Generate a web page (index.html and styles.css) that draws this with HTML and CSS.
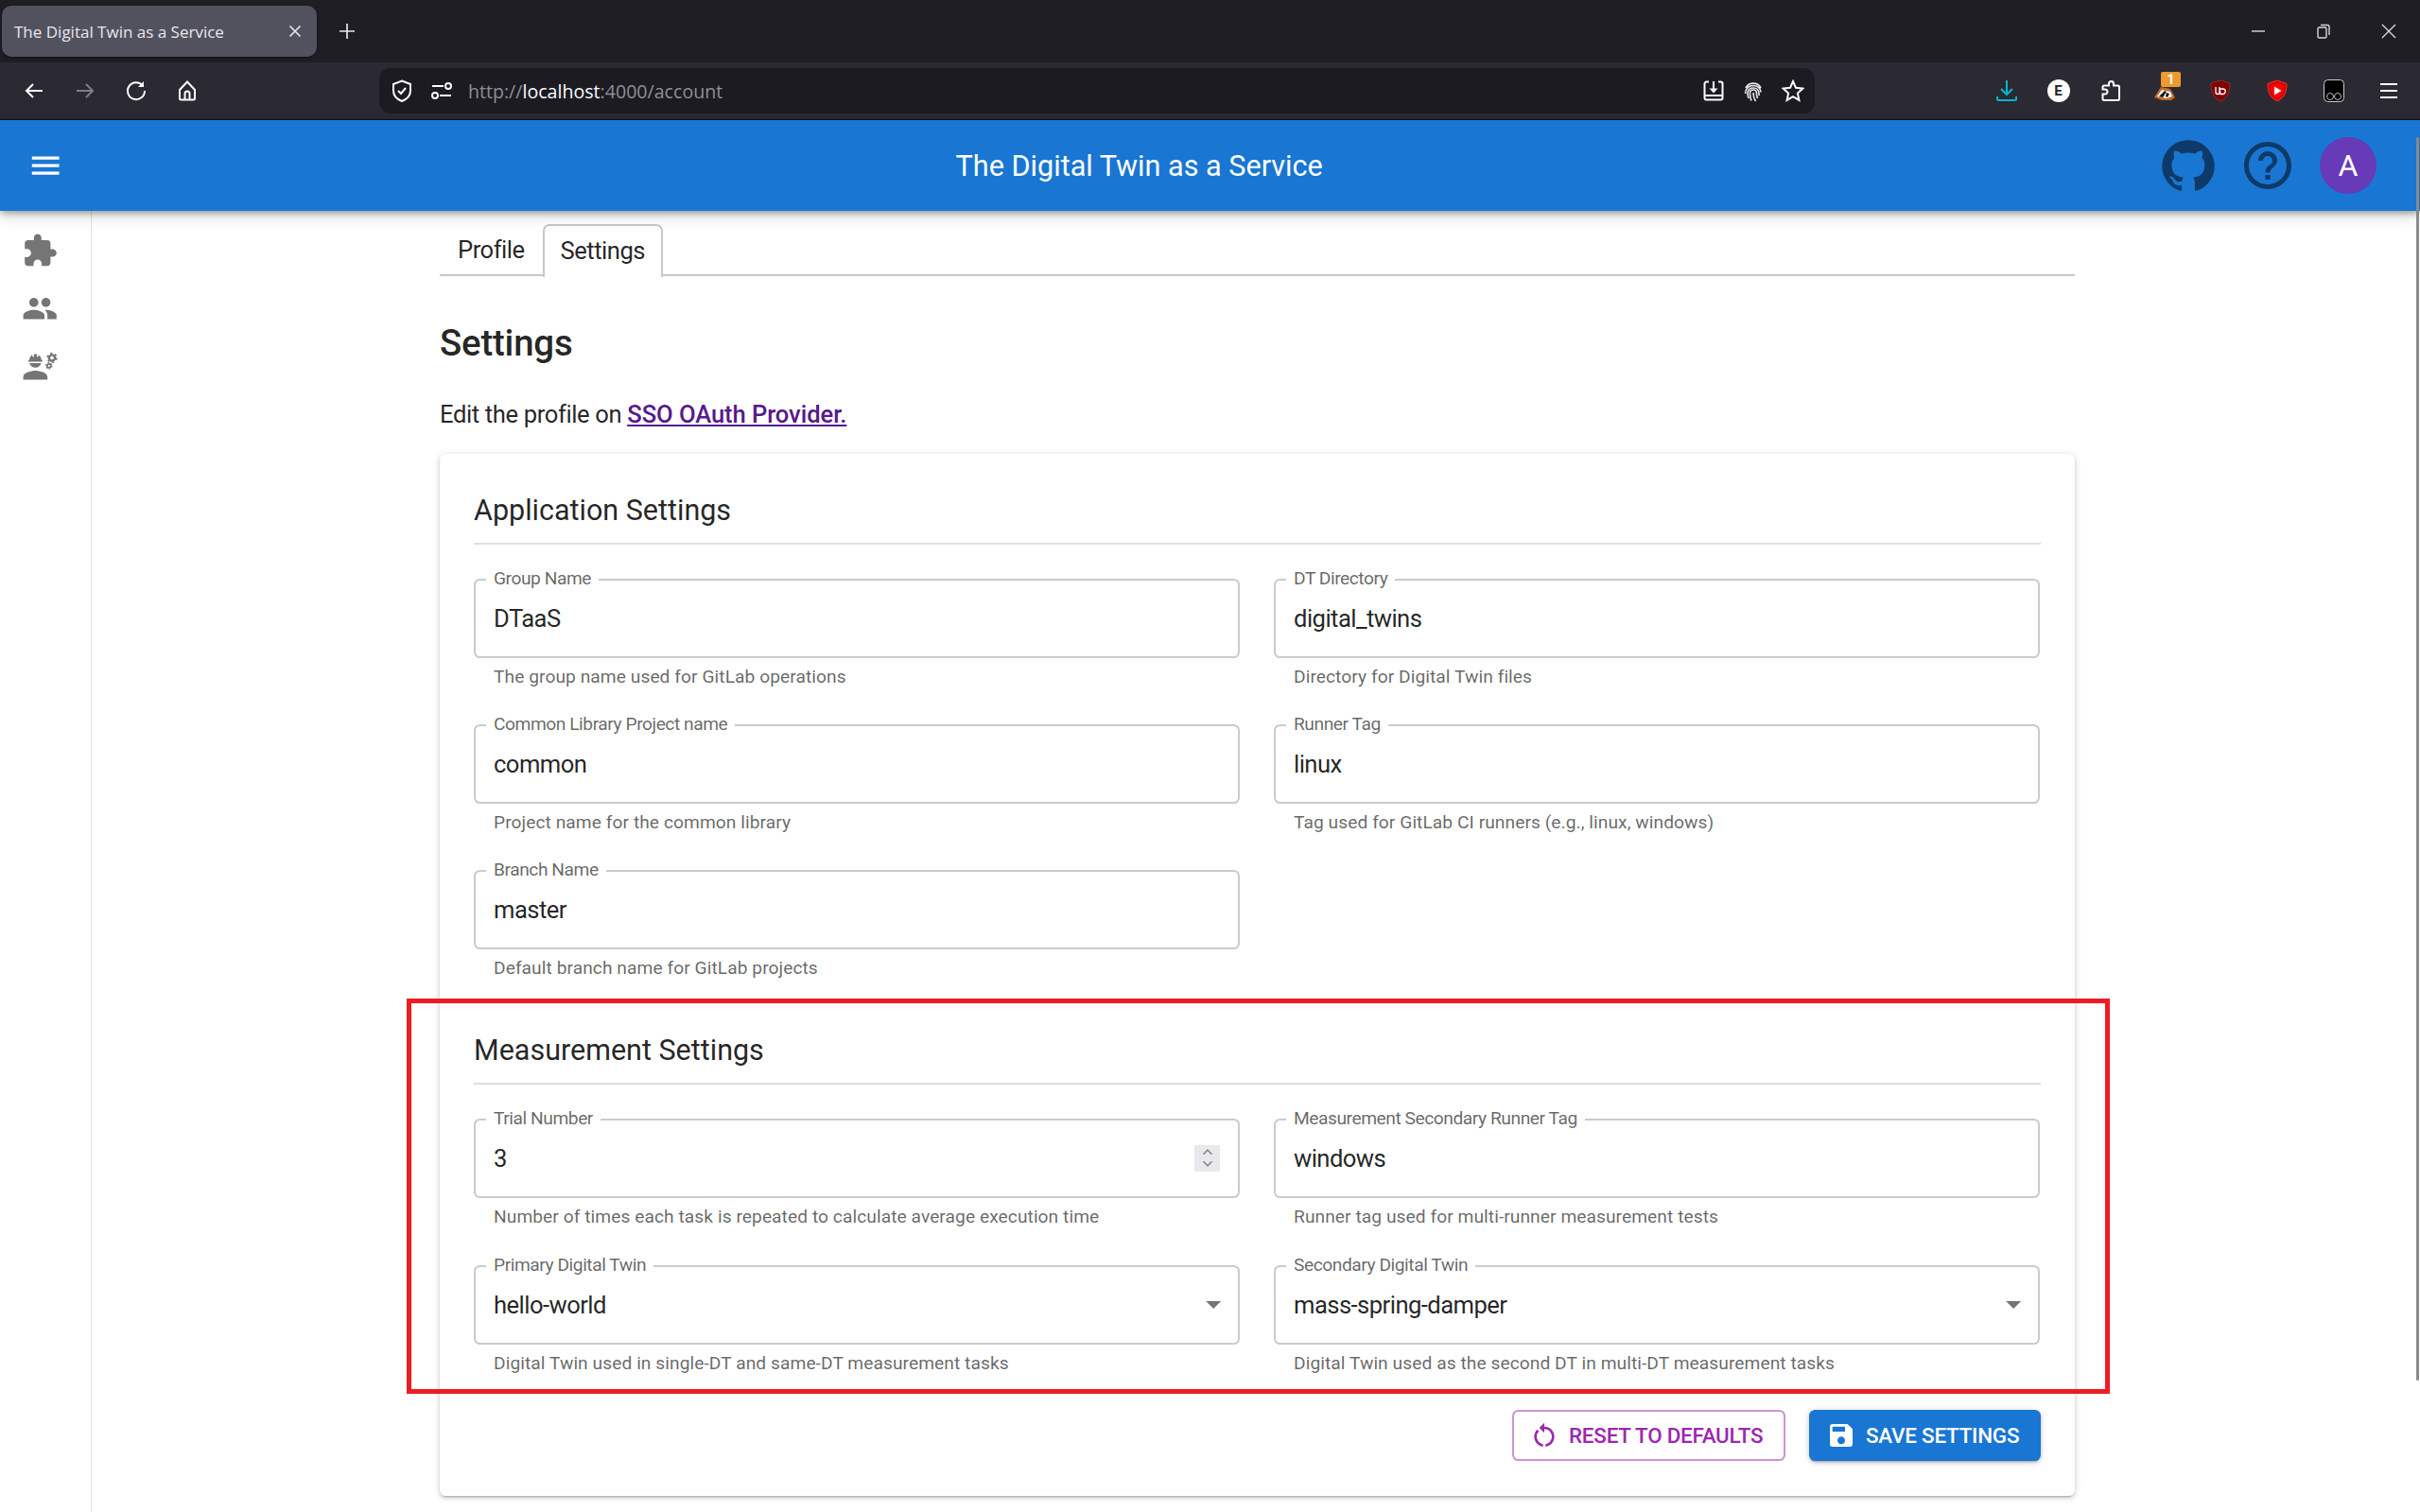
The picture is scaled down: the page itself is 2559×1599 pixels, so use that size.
FILE: index.html
```html
<!DOCTYPE html>
<html lang="en">
<head>
    <meta charset="UTF-8">
    <title>The Digital Twin as a Service</title>
    <link rel="stylesheet" href="styles.css">
</head>
<body>
    <!-- browser chrome -->
    <div class="tabstrip">
        <div class="tab">
            <span class="tab-title">The Digital Twin as a Service</span>
            <svg class="tab-close" viewBox="0 0 14 14"><path d="M1.5 1.5l11 11M12.5 1.5l-11 11"/></svg>
        </div>
        <svg class="tab-new" viewBox="0 0 18 18"><path d="M9 1v16M1 9h16"/></svg>
        <div class="window-btns">
            <svg viewBox="0 0 16 16"><path d="M1 8h14"/></svg>
            <svg viewBox="0 0 16 16"><rect x="2" y="4" width="9" height="11" rx="1.5"/><path d="M5 1.5h7a2 2 0 0 1 2 2V12"/></svg>
            <svg viewBox="0 0 16 16"><path d="M1 1l14 14M15 1L1 15"/></svg>
        </div>
    </div>
    <div class="toolbar">
        <div class="nav-btn"><svg viewBox="0 0 24 24"><path d="M21 12H4M11 5l-7 7 7 7"/></svg></div>
        <div class="nav-btn dim"><svg viewBox="0 0 24 24"><path d="M3 12h17M13 5l7 7-7 7"/></svg></div>
        <div class="nav-btn"><svg viewBox="0 0 24 24"><path d="M19 6.500A9 9 0 1 0 21 12"/><path class="solid" d="M20 2v6h-6z"/></svg></div>
        <div class="nav-btn"><svg viewBox="0 0 24 24"><path d="M12 2.500L4 11v9a1.500 1.500 0 0 0 1.500 1.500h13A1.500 1.500 0 0 0 20 20v-9z"/><path d="M9.500 21.500V15a2.500 2.500 0 0 1 5 0v6.500"/></svg></div>
        <div class="urlbar">
            <svg class="url-icon" viewBox="0 0 24 24"><path d="M12 1.500l9 3.500v7c0 5.500-4 9-9 11-5-2-9-5.500-9-11V5z"/><path d="M8 12l3 3 5-6"/></svg>
            <svg class="url-icon sliders" viewBox="0 0 24 24"><path d="M2 7h12M10 17h12"/><circle cx="19" cy="7" r="3"/><circle cx="5" cy="17" r="3"/></svg>
            <span class="url-text">http://<b>localhost</b>:4000/account</span>
            <div class="url-actions">
                <svg viewBox="0 0 24 24"><path d="M7 2.500H4.500a2 2 0 0 0-2 2v15a2 2 0 0 0 2 2h15a2 2 0 0 0 2-2v-15a2 2 0 0 0-2-2H17M2.500 17h19"/><path d="M12 2v9"/><path class="solid" d="M7.500 9.500h9L12 14.500z"/></svg>
                <svg class="thin" viewBox="0 0 24 24"><path d="M4 9a9 9 0 0 1 16 0M3.500 15c.500-5 3-8.500 8.500-8.500 5 0 8 3.500 8 7M7 20c-.800-2-1-4-1-6 .500-3 3-5 6-5s6 2 6 6c0 1 .200 1.500.500 2M10 22.500c-1-2-1.500-4.500-1.500-8.500 0-2 1.500-3 3.500-3s3.500 1.500 3.500 4c0 2 .500 3.500 1 5M12 14c0 3 .500 6 2.500 9"/></svg>
                <svg viewBox="0 0 24 24"><path d="M12 2l3 6.800 7.300.8-5.400 5 1.500 7.300L12 18.200l-6.400 3.700 1.500-7.300-5.400-5 7.300-.8z"/></svg>
            </div>
        </div>
        <div class="tool-btns">
            <div class="tool-btn"><svg class="teal" viewBox="0 0 24 24"><path d="M12 1v14M6 10l6 6 6-6M2 18v2.500a1.500 1.500 0 0 0 1.500 1.500h17a1.500 1.500 0 0 0 1.500-1.500V18"/></svg></div>
            <div class="tool-btn"><span class="ext-e">E</span></div>
            <div class="tool-btn"><svg viewBox="0 0 24 24"><path d="M4 22a1.500 1.500 0 0 1-1.500-1.500v-5H5a2.500 2.500 0 0 0 0-5H2.500V8A1.500 1.500 0 0 1 4 6.500h5V4.500a2.500 2.500 0 0 1 5 0v2h4.500A1.500 1.500 0 0 1 20 8v12.500a1.500 1.500 0 0 1-1.500 1.500z" transform="translate(1 0)"/></svg></div>
            <div class="tool-btn badger">
                <svg class="plain" viewBox="0 0 24 24"><path fill="#c4681d" d="M1 19L8 8l10 2 5 9-4 3-10 0z"/><path fill="#fff" d="M4 18l5-7 9 2 2 5-6 2z"/><path fill="#111" d="M6 18l6-6 2 1-4 6zM14 14l3 1-2 4-2-1z"/></svg>
                <span class="ext-count">1</span>
            </div>
            <div class="tool-btn wide"><svg class="plain" viewBox="0 0 24 24"><path fill="#800000" stroke="#a33" stroke-width=".7" d="M12 1l10 3c0 9-2 15-10 19C4 19 2 13 2 4z"/><path fill="none" stroke="#fff" stroke-width="1.300" d="M7 8v5.500a2 2 0 0 0 4 0V8M11 10h3.500a2.500 2.500 0 0 1 0 5.500H12z"/></svg></div>
            <div class="tool-btn wide"><svg class="plain" viewBox="0 0 24 24"><path fill="#f00" stroke="#f33" stroke-width=".8" d="M12 1l10 3.500c0 9-2 14.500-10 18.500C4 19 2 13.500 2 4.500z"/><path fill="none" stroke="#900" stroke-width=".8" d="M12 3l8 2.800c0 7-1.500 12-8 15.200C5.500 17.800 4 12.800 4 5.800z"/><path fill="#fff" d="M9 7.500l7.500 4.500L9 16.500z"/></svg></div>
            <div class="tool-btn wide"><svg class="plain" viewBox="0 0 24 24"><rect x="1.500" y=".5" width="21" height="23" rx="4" fill="#000" stroke="#ccc" stroke-width="1"/><circle cx="8" cy="18" r="3.500" fill="none" stroke="#bbb" stroke-width="1"/><circle cx="16" cy="18" r="3.500" fill="none" stroke="#bbb" stroke-width="1"/></svg></div>
            <div class="tool-btn"><svg viewBox="0 0 24 24"><path d="M3 5h18M3 12h18M3 19h18"/></svg></div>
        </div>
    </div>

    <!-- app bar -->
    <header class="appbar">
        <svg class="menu-icon" viewBox="0 0 24 24"><path d="M3 18h18v-2H3v2zm0-5h18v-2H3v2zm0-7v2h18V6H3z"/></svg>
        <div class="appbar-title">The Digital Twin as a Service</div>
        <svg class="appbar-icon github" viewBox="0 0 24 24"><path d="M12 1.270a11 11 0 00-3.480 21.460c.550.090.730-.280.730-.550v-1.840c-3.030.640-3.670-1.460-3.670-1.460-.550-1.290-1.280-1.650-1.280-1.650-.920-.650.100-.650.100-.650 1.100 0 1.730 1.100 1.730 1.100.920 1.650 2.570 1.200 3.210.920a2 2 0 01.640-1.470c-2.470-.270-5.040-1.190-5.040-5.500 0-1.100.460-2.100 1.200-2.840a3.760 3.760 0 010-2.930s.910-.280 3.110 1.100c1.800-.490 3.700-.490 5.500 0 2.100-1.380 3.020-1.100 3.020-1.100a3.760 3.760 0 010 2.930c.830.740 1.200 1.740 1.200 2.940 0 4.210-2.570 5.130-5.040 5.400.450.370.820.920.820 2.020v3.030c0 .270.100.640.730.550A11 11 0 0012 1.270"/></svg>
        <svg class="appbar-icon help" viewBox="0 0 24 24"><path d="M11 18h2v-2h-2v2zm1-16C6.480 2 2 6.480 2 12s4.480 10 10 10 10-4.480 10-10S17.520 2 12 2zm0 18c-4.410 0-8-3.590-8-8s3.590-8 8-8 8 3.590 8 8-3.590 8-8 8zm0-14c-2.210 0-4 1.790-4 4h2c0-1.100.900-2 2-2s2 .900 2 2c0 2-3 1.750-3 5h2c0-2.250 3-2.500 3-5 0-2.210-1.790-4-4-4z"/></svg>
        <div class="avatar">A</div>
    </header>

    <div class="layout">
        <nav class="sidebar">
            <svg viewBox="0 0 24 24"><path d="M20.500 11H19V7c0-1.100-.900-2-2-2h-4V3.500C13 2.120 11.880 1 10.500 1S8 2.120 8 3.500V5H4c-1.100 0-1.990.900-1.990 2v3.800H3.500c1.490 0 2.700 1.210 2.700 2.700s-1.210 2.700-2.700 2.700H2V20c0 1.100.900 2 2 2h3.800v-1.500c0-1.490 1.210-2.700 2.700-2.700 1.490 0 2.700 1.210 2.700 2.700V22H17c1.100 0 2-.900 2-2v-4h1.500c1.380 0 2.500-1.120 2.500-2.500S21.880 11 20.500 11z"/></svg>
            <svg viewBox="0 0 24 24"><path d="M16 11c1.660 0 2.990-1.340 2.990-3S17.660 5 16 5c-1.660 0-3 1.340-3 3s1.340 3 3 3zm-8 0c1.660 0 2.990-1.340 2.990-3S9.660 5 8 5C6.340 5 5 6.340 5 8s1.340 3 3 3zm0 2c-2.330 0-7 1.170-7 3.500V19h14v-2.500c0-2.330-4.670-3.500-7-3.500zm8 0c-.290 0-.620.020-.970.050 1.160.840 1.970 1.970 1.970 3.450V19h6v-2.500c0-2.330-4.670-3.500-7-3.500z"/></svg>
            <svg viewBox="0 0 24 24"><path d="M9 15c-2.670 0-8 1.340-8 4v2h16v-2c0-2.660-5.330-4-8-4zM4.740 9h8.530c.270 0 .490-.220.490-.490v-.020c0-.270-.220-.490-.490-.490H13c0-1.480-.810-2.750-2-3.450v.950c0 .280-.220.500-.500.500s-.500-.220-.500-.500V4.140C9.680 4.060 9.350 4 9 4s-.680.060-1 .140V5.500c0 .280-.220.500-.500.500S7 5.780 7 5.500v-.950C5.810 5.250 5 6.520 5 8h-.260c-.270 0-.490.220-.490.490v.030c0 .260.220.480.490.480zM9 13c1.860 0 3.410-1.280 3.860-3H5.140c.450 1.720 2 3 3.860 3z"/><g fill="none" stroke="currentColor"><circle cx="20" cy="6.500" r="1.900" stroke-width="1.500"/><circle cx="20" cy="6.500" r="3" stroke-width="1" stroke-dasharray="1.500 1.640"/><circle cx="18" cy="11.800" r="1.200" stroke-width="1.100"/><circle cx="18" cy="11.800" r="2" stroke-width=".8" stroke-dasharray="1 1.090"/></g></svg>
        </nav>

        <main class="content">
            <div class="tabs">
                <div class="tabs-item">Profile</div>
                <div class="tabs-item active">Settings</div>
            </div>
            <h2 class="page-title">Settings</h2>
            <p class="intro">Edit the profile on <a href="#">SSO OAuth Provider.</a></p>

            <section class="card">
                <h3 class="section-title">Application Settings</h3>
                <div class="field-grid">
                    <div class="field">
                        <div class="box"><span class="box-label">Group Name</span>DTaaS</div>
                        <div class="helper">The group name used for GitLab operations</div>
                    </div>
                    <div class="field">
                        <div class="box"><span class="box-label">DT Directory</span>digital_twins</div>
                        <div class="helper">Directory for Digital Twin files</div>
                    </div>
                    <div class="field">
                        <div class="box"><span class="box-label">Common Library Project name</span>common</div>
                        <div class="helper">Project name for the common library</div>
                    </div>
                    <div class="field">
                        <div class="box"><span class="box-label">Runner Tag</span>linux</div>
                        <div class="helper">Tag used for GitLab CI runners (e.g., linux, windows)</div>
                    </div>
                    <div class="field">
                        <div class="box"><span class="box-label">Branch Name</span>master</div>
                        <div class="helper">Default branch name for GitLab projects</div>
                    </div>
                </div>

                <h3 class="section-title second">Measurement Settings</h3>
                <div class="field-grid">
                    <div class="field">
                        <div class="box"><span class="box-label">Trial Number</span>3
                            <div class="spinner">
                                <svg viewBox="0 0 12 8"><path d="M2 6l4-4 4 4"/></svg>
                                <svg viewBox="0 0 12 8"><path d="M2 2l4 4 4-4"/></svg>
                            </div>
                        </div>
                        <div class="helper">Number of times each task is repeated to calculate average execution time</div>
                    </div>
                    <div class="field">
                        <div class="box"><span class="box-label">Measurement Secondary Runner Tag</span>windows</div>
                        <div class="helper">Runner tag used for multi-runner measurement tests</div>
                    </div>
                    <div class="field">
                        <div class="box"><span class="box-label">Primary Digital Twin</span>hello-world
                            <svg class="caret" viewBox="0 0 24 24"><path d="M7 10l5 5 5-5z"/></svg>
                        </div>
                        <div class="helper">Digital Twin used in single-DT and same-DT measurement tasks</div>
                    </div>
                    <div class="field">
                        <div class="box"><span class="box-label">Secondary Digital Twin</span>mass-spring-damper
                            <svg class="caret" viewBox="0 0 24 24"><path d="M7 10l5 5 5-5z"/></svg>
                        </div>
                        <div class="helper">Digital Twin used as the second DT in multi-DT measurement tasks</div>
                    </div>
                </div>

                <div class="actions">
                    <button class="btn btn-outline">
                        <svg viewBox="0 0 24 24"><path d="M12 5V2L8 6l4 4V7c3.310 0 6 2.690 6 6 0 2.970-2.170 5.430-5 5.910v2.020c3.950-.490 7-3.850 7-7.930 0-4.420-3.580-8-8-8zm-6 8c0-1.650.670-3.150 1.760-4.240L6.340 7.340C4.900 8.790 4 10.790 4 13c0 4.080 3.050 7.440 7 7.930v-2.020c-2.830-.480-5-2.940-5-5.910z"/></svg>
                        Reset to Defaults
                    </button>
                    <button class="btn btn-primary">
                        <svg viewBox="0 0 24 24"><path d="M17 3H5c-1.110 0-2 .900-2 2v14c0 1.100.890 2 2 2h14c1.100 0 2-.900 2-2V7l-4-4zm-5 16c-1.660 0-3-1.340-3-3s1.340-3 3-3 3 1.340 3 3-1.340 3-3 3zm3-10H5V5h10v4z"/></svg>
                        Save Settings
                    </button>
                </div>
            </section>
        </main>
    </div>

    <!-- annotation and overlay scrollbar -->
    <div class="highlight"></div>
    <div class="scroll-thumb"></div>
</body>
</html>
```

FILE: styles.css
```css
:root {
    --primary: #1976d2;
    --purple: #9c27b0;
    --outline: #cbcbcb;
    --text: rgba(0,0,0,0.87);
    --muted: rgba(0,0,0,0.6);
    --chrome-dark: #1f1e24;
    --chrome: #2b2a33;
    --chrome-icon: #fbfbfe;
}

html, body {
    margin: 0;
    height: 100%;
    overflow: hidden;
}

body {
    font-family: Roboto, sans-serif;
    color: var(--text);
    background: white;
    position: relative;
}

/* browser chrome */
.tabstrip {
    height: 66px;
    background: var(--chrome-dark);
    display: flex;
    align-items: center;
    font-family: "Open Sans", sans-serif;
}

.tab {
    width: 333px;
    height: 54px;
    margin-left: 2px;
    box-sizing: border-box;
    padding: 0 16px 0 13px;
    background: #52525e;
    border-radius: 10px;
    display: flex;
    align-items: center;
    justify-content: space-between;
    box-shadow: 0 1px 3px rgba(0,0,0,0.5);
}

.tab-title {
    color: #e8e8ec;
    font-size: 17px;
}

.tab-close {
    width: 14px;
    height: 14px;
    fill: none;
    stroke: #e8e8ec;
    stroke-width: 1.6;
}

.tab-new {
    width: 18px;
    height: 18px;
    margin-left: 23px;
    fill: none;
    stroke: #e8e8ec;
    stroke-width: 1.7;
}

.window-btns {
    margin-left: auto;
    margin-right: 25px;
    display: flex;
    gap: 53px;
}

.window-btns svg {
    width: 16px;
    height: 16px;
    fill: none;
    stroke: #d8d8dc;
    stroke-width: 1.4;
}

.toolbar {
    height: 60px;
    border-bottom: 1px solid #111;
    background: var(--chrome);
    display: flex;
    align-items: center;
    padding-left: 9px;
    font-family: "Open Sans", sans-serif;
}

.nav-btn {
    width: 54px;
    display: flex;
    justify-content: center;
}

.nav-btn svg, .url-actions svg, .tool-btn svg {
    width: 24px;
    height: 24px;
    fill: none;
    stroke: var(--chrome-icon);
    stroke-width: 2;
}

.url-actions svg.thin {
    stroke-width: 1.7;
    stroke: #e4e4e6;
}

.nav-btn.dim svg {
    opacity: 0.4;
}

svg .solid {
    fill: var(--chrome-icon);
    stroke: none;
}

.urlbar {
    width: 1518px;
    height: 48px;
    margin-left: 176px;
    box-sizing: border-box;
    padding: 0 11px 0 12px;
    background: #1c1b22;
    border-radius: 12px;
    display: flex;
    align-items: center;
}

.url-icon {
    width: 24px;
    height: 24px;
    fill: none;
    stroke: var(--chrome-icon);
    stroke-width: 2;
}

.url-icon.sliders {
    margin-left: 18px;
}

.url-text {
    margin-left: 16px;
    color: #8f8f94;
    font-size: 19.6px;
}

.url-text b {
    color: var(--chrome-icon);
    font-weight: 400;
}

.url-actions {
    margin-left: auto;
    display: flex;
    gap: 18px;
}

.tool-btns {
    margin-left: 175px;
    display: flex;
    align-items: center;
}

.tool-btn {
    width: 55px;
    display: flex;
    justify-content: center;
    align-items: center;
    position: relative;
}

.tool-btn.badger {
    width: 59px;
}

.tool-btn.wide {
    width: 60px;
}

.tool-btn svg.teal {
    stroke: #00b8cc;
}

.tool-btn svg.plain {
    stroke: none;
}

.ext-e {
    width: 24px;
    height: 24px;
    border-radius: 50%;
    background: white;
    color: #222;
    font: 700 15px/24px Roboto, sans-serif;
    text-align: center;
}

.ext-count {
    position: absolute;
    top: -8px;
    right: 12px;
    width: 21px;
    height: 16px;
    border-radius: 2px;
    background: #ee9a2e;
    color: white;
    font: 700 14px/16px Roboto, sans-serif;
    text-align: center;
}

/* app bar */
.appbar {
    height: 96px;
    background: var(--primary);
    display: flex;
    align-items: center;
    position: relative;
    box-shadow: 0 3px 7px -1px rgba(0,0,0,0.35), 0 6px 16px 0 rgba(0,0,0,0.14);
}

.menu-icon {
    width: 38.4px;
    height: 38.4px;
    margin-left: 29px;
    fill: white;
}

.appbar-title {
    flex: 1;
    padding-left: 58px;
    text-align: center;
    color: white;
    font-size: 30.6px;
    font-weight: 400;
}

.appbar-icon {
    width: 60px;
    height: 60px;
    fill: #0d3a69;
}

.appbar-icon.help {
    margin-left: 24px;
}

.avatar {
    width: 60px;
    height: 60px;
    margin: 0 46px 0 25px;
    border-radius: 50%;
    background: #673ab7;
    color: white;
    font-size: 32px;
    line-height: 60px;
    text-align: center;
}

/* page layout */
.layout {
    display: flex;
    height: 1376px;
}

.sidebar {
    width: 97px;
    flex: none;
    box-sizing: border-box;
    border-right: 1px solid #e0e0e0;
    padding: 23px 12px 0 0;
    display: flex;
    flex-direction: column;
    align-items: center;
    gap: 22.6px;
}

.sidebar svg {
    width: 38.4px;
    height: 38.4px;
    fill: #757575;
    color: #757575;
}

.content {
    width: 1729px;
    margin-left: 368px;
    padding-top: 14px;
}

.tabs {
    display: flex;
    height: 53px;
    border-bottom: 2px solid #c8c8c8;
    font-size: 25.6px;
    letter-spacing: -0.5px;
}

.tabs-item {
    padding: 0 19px;
    line-height: 54px;
}

.tabs-item.active {
    height: 54px;
    margin-bottom: -1px;
    padding: 0 17px;
    background: white;
    border: 2px solid #c8c8c8;
    border-bottom: none;
    border-radius: 7px 7px 0 0;
    line-height: 52px;
}

.page-title {
    margin: 47.5px 0 0;
    font-size: 38.4px;
    font-weight: 500;
    line-height: 46px;
    letter-spacing: -0.2px;
}

.intro {
    margin: 33px 0 0;
    font-size: 25.6px;
    line-height: 38px;
    letter-spacing: -0.38px;
}

.intro a {
    color: #551a8b;
    font-weight: 500;
    letter-spacing: -0.08px;
}

.card {
    margin-top: 23px;
    padding: 36px 36px 37px;
    border-radius: 6.4px;
    box-shadow: 0 3px 2px -2px rgba(0,0,0,0.2), 0 2px 4px 0 rgba(0,0,0,0.14), 0 1px 8px 0 rgba(0,0,0,0.12);
}

.section-title {
    margin: 0 0 36px;
    padding-bottom: 10px;
    border-bottom: 2px solid #e0e0e0;
    font-size: 30.5px;
    font-weight: 400;
    line-height: 48px;
}

.section-title.second {
    margin-top: 48px;
}

.field-grid {
    display: grid;
    grid-template-columns: 810px 810px;
    column-gap: 36px;
    row-gap: 35px;
}

.section-title.second + .field-grid {
    row-gap: 36px;
}

.box {
    height: 84px;
    box-sizing: border-box;
    padding-left: 19px;
    border: 2px solid var(--outline);
    border-radius: 6.4px;
    display: flex;
    align-items: center;
    position: relative;
    font-size: 25.6px;
    letter-spacing: -0.55px;
}

.box-label {
    position: absolute;
    left: 11px;
    top: -13px;
    padding: 0 8px;
    background: white;
    color: var(--muted);
    font-size: 19.2px;
    line-height: 22px;
    letter-spacing: -0.45px;
}

.helper {
    margin-top: 5px;
    padding-left: 21px;
    color: var(--muted);
    font-size: 19.2px;
    line-height: 30px;
    letter-spacing: 0.06px;
}

.spinner {
    margin-left: auto;
    margin-right: 19px;
    width: 27px;
    height: 28px;
    background: #e9e9ed;
    display: flex;
    flex-direction: column;
    align-items: center;
    justify-content: center;
    gap: 3px;
}

.spinner svg {
    width: 14px;
    height: 9px;
    fill: none;
    stroke: #8a8a8a;
    stroke-width: 1.5;
}

.caret {
    margin-left: auto;
    margin-right: 7px;
    width: 38.4px;
    height: 38.4px;
    fill: #757575;
}

.actions {
    margin-top: 34px;
    display: flex;
    justify-content: flex-end;
    gap: 25px;
}

.btn {
    height: 54px;
    box-sizing: border-box;
    border-radius: 6.4px;
    display: flex;
    align-items: center;
    font-family: Roboto, sans-serif;
    font-size: 22.4px;
    font-weight: 500;
    letter-spacing: -0.22px;
    text-transform: uppercase;
    cursor: pointer;
}

.btn svg {
    width: 32px;
    height: 32px;
    margin-right: 10px;
    fill: currentColor;
}

.btn-outline {
    width: 289px;
    padding: 0 0 0 16px;
    background: white;
    color: var(--purple);
    border: 2px solid rgba(156,39,176,0.5);
}

.btn-primary {
    width: 245px;
    padding: 0 0 0 18px;
    background: var(--primary);
    color: white;
    border: none;
    box-shadow: 0 3px 2px -2px rgba(0,0,0,0.2), 0 2px 4px 0 rgba(0,0,0,0.14), 0 1px 8px 0 rgba(0,0,0,0.12);
}

/* overlays */
.highlight {
    position: absolute;
    left: 430px;
    top: 1056px;
    width: 1801px;
    height: 418px;
    box-sizing: border-box;
    border: 5px solid #ed1c24;
    pointer-events: none;
}

.scroll-thumb {
    position: absolute;
    left: 2555px;
    top: 145px;
    width: 3px;
    height: 1315px;
    background: #8a8a8a;
    border-radius: 2px;
}
```
